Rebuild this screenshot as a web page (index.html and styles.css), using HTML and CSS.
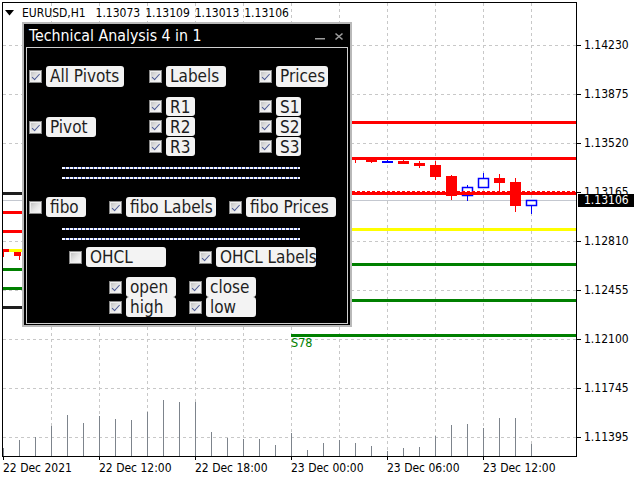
FILE: index.html
```html
<!DOCTYPE html>
<html>
<head>
<meta charset="utf-8">
<title>EURUSD,H1</title>
<link rel="stylesheet" href="styles.css">
</head>
<body>
<div class="screen">
  <div class="plotcell">
    <div class="plot">
      <svg class="graph" width="573" height="453" viewBox="3 3 573 453">
        <g class="grid" fill="none" stroke="#c8c8c8" stroke-width="1" stroke-dasharray="3 3" shape-rendering="crispEdges">
          <path d="M3 45.5H576M3 94.5H576M3 143.5H576M3 192.5H576M3 241.5H576M3 290.5H576M3 339.5H576M3 388.5H576M3 437.5H576"/>
          <path d="M51.5 3V456M99.5 3V456M147.5 3V456M195.5 3V456M243.5 3V456M291.5 3V456M339.5 3V456M387.5 3V456M435.5 3V456M483.5 3V456M531.5 3V456"/>
        </g>
        <path fill="none" stroke="#7d848c" stroke-width="1" shape-rendering="crispEdges" d="M3.5 456V448M19.5 456V440M35.5 456V437M51.5 456V426M67.5 456V415M83.5 456V423M99.5 456V416M115.5 456V419M131.5 456V420M147.5 456V412M163.5 456V400M179.5 456V402M195.5 456V402M211.5 456V432M227.5 456V438M243.5 456V439M259.5 456V439M275.5 456V445M291.5 456V433M307.5 456V450M323.5 456V443M339.5 456V440M355.5 456V443M371.5 456V446M387.5 456V451M403.5 456V448M419.5 456V447M435.5 456V436M451.5 456V425M467.5 456V424M483.5 456V428M499.5 456V418M515.5 456V418M531.5 456V444"/>
        <path fill="none" stroke="#c4c8d0" stroke-width="1" shape-rendering="crispEdges" d="M3 200.5H576"/>
        <g shape-rendering="crispEdges">
          <path fill="none" stroke="#ff0000" stroke-width="1" d="M355.5 157V163M371.5 157V163M403.5 158V164M419.5 161V168M435.5 161V180M451.5 175V200M499.5 174V191M515.5 178V212"/>
          <path fill="none" stroke="#0000ff" stroke-width="1" d="M387.5 159V163M467.5 185V201M483.5 173V188M531.5 200V214"/>
          <rect x="350" y="157" width="11" height="3" fill="#ff0000"/>
          <rect x="366" y="158" width="11" height="4" fill="#ff0000"/>
          <rect x="382" y="161" width="11" height="2" fill="#0000ff"/>
          <rect x="398" y="161" width="11" height="3" fill="#ff0000"/>
          <rect x="414" y="163" width="11" height="3" fill="#ff0000"/>
          <rect x="430" y="165" width="11" height="12" fill="#ff0000"/>
          <rect x="446" y="176" width="11" height="20" fill="#ff0000"/>
          <rect x="494" y="178" width="11" height="5" fill="#ff0000"/>
          <rect x="510" y="182" width="11" height="24" fill="#ff0000"/>
        </g>
        <g fill="#ffffff" stroke="#0000ff" stroke-width="1.5">
          <rect x="462.5" y="187.5" width="10" height="8"/>
          <rect x="478.5" y="178.5" width="10" height="9"/>
          <rect x="526.5" y="200.5" width="10" height="5"/>
        </g>
        <g shape-rendering="crispEdges">
          <rect x="352" y="121" width="224" height="3" fill="#ff0000"/>
          <rect x="352" y="157" width="224" height="3" fill="#ff0000"/>
          <rect x="352" y="192" width="224" height="3" fill="#ff0000"/>
          <path d="M352 191.5H576" stroke="#ff0000" stroke-width="1" stroke-dasharray="3 2"/>
          <rect x="352" y="228" width="224" height="3" fill="#ffff00"/>
          <rect x="352" y="263" width="224" height="3" fill="#008000"/>
          <rect x="352" y="299" width="224" height="3" fill="#008000"/>
          <rect x="291" y="334" width="285" height="3" fill="#008000"/>
          <rect x="3" y="192" width="19" height="3" fill="#1e1e1e"/>
          <rect x="3" y="211" width="19" height="3" fill="#ff0000"/>
          <rect x="3" y="230" width="19" height="3" fill="#ff0000"/>
          <rect x="3" y="249" width="6" height="3" fill="#ff0000"/>
          <rect x="9" y="249" width="13" height="3" fill="#ffff00"/>
          <rect x="3" y="249" width="1" height="8" fill="#ff0000"/>
          <rect x="14" y="252" width="7" height="4" fill="#ff0000"/>
          <rect x="19" y="252" width="1" height="8" fill="#ff0000"/>
          <rect x="3" y="268" width="19" height="3" fill="#008000"/>
          <rect x="3" y="287" width="19" height="3" fill="#008000"/>
          <rect x="3" y="306" width="19" height="3" fill="#1e1e1e"/>
        </g>
        <text class="objlabel" x="291" y="347">S78</text>
      </svg>
      <div class="header">
        <svg class="tri" width="9" height="6" viewBox="0 0 9 6"><polygon points="0,0 9,0 4.5,5.5" fill="#000"/></svg>
        <span class="quote">EURUSD,H1  1.13073 1.13109 1.13013 1.13106</span>
      </div>
    </div>
  </div>

  <div class="yaxis">
    <div class="ylab">1.14230</div>
    <div class="ylab">1.13875</div>
    <div class="ylab">1.13520</div>
    <div class="ylab">1.13165</div>
    <div class="ylab">1.12810</div>
    <div class="ylab">1.12455</div>
    <div class="ylab">1.12100</div>
    <div class="ylab">1.11745</div>
    <div class="ylab">1.11395</div>
  </div>

  <div class="xaxis">
    <div class="xlab">22 Dec 2021</div>
    <div class="xlab">22 Dec 12:00</div>
    <div class="xlab">22 Dec 18:00</div>
    <div class="xlab">23 Dec 00:00</div>
    <div class="xlab">23 Dec 06:00</div>
    <div class="xlab">23 Dec 12:00</div>
  </div>

  <div class="curprice">1.13106</div>

  <div class="panel">
    <div class="titlebar">
      <span class="title">Technical Analysis 4 in 1</span>
      <svg class="winbtns" width="32" height="10" viewBox="0 0 32 10">
        <path d="M2 7.75H12" stroke="#9c9c9c" stroke-width="1.5" fill="none"/>
        <path d="M22.5 2.5L29.5 8.5M29.5 2.5L22.5 8.5" stroke="#9c9c9c" stroke-width="1.6" fill="none"/>
      </svg>
    </div>
    <div class="frame">
      <div class="top">
        <div class="ctl a1"><i class="cb on"></i><span class="lbl h21 w78">All Pivots</span></div>
        <div class="ctl a2"><i class="cb on"></i><span class="lbl h21 w60">Labels</span></div>
        <div class="ctl a3"><i class="cb on"></i><span class="lbl h21 w52">Prices</span></div>
        <div class="ctl pv"><i class="cb on"></i><span class="lbl h20 w50">Pivot</span></div>
        <div class="ctl r1"><i class="cb on"></i><span class="lbl h19 w29">R1</span></div>
        <div class="ctl r2"><i class="cb on"></i><span class="lbl h19 w29">R2</span></div>
        <div class="ctl r3"><i class="cb on"></i><span class="lbl h19 w29">R3</span></div>
        <div class="ctl s1"><i class="cb on"></i><span class="lbl h19 w25">S1</span></div>
        <div class="ctl s2"><i class="cb on"></i><span class="lbl h19 w25">S2</span></div>
        <div class="ctl s3"><i class="cb on"></i><span class="lbl h19 w25">S3</span></div>
      </div>
      <div class="dash d1"></div>
      <div class="dash d2"></div>
      <div class="row fibo">
        <div class="ctl"><i class="cb"></i><span class="lbl h20 w40">fibo</span></div>
        <div class="ctl"><i class="cb on"></i><span class="lbl h20 w90">fibo Labels</span></div>
        <div class="ctl"><i class="cb on"></i><span class="lbl h20 w90">fibo Prices</span></div>
      </div>
      <div class="dash d3"></div>
      <div class="dash d2"></div>
      <div class="row ohcl">
        <div class="ctl"><i class="cb"></i><span class="lbl h20 w80">OHCL</span></div>
        <div class="ctl"><i class="cb on"></i><span class="lbl h20 w100">OHCL Labels</span></div>
      </div>
      <div class="row oc">
        <div class="ctl"><i class="cb on"></i><span class="lbl h20 w50">open</span></div>
        <div class="ctl"><i class="cb on"></i><span class="lbl h20 w50">close</span></div>
      </div>
      <div class="row hl">
        <div class="ctl"><i class="cb on"></i><span class="lbl h20 w50">high</span></div>
        <div class="ctl"><i class="cb on"></i><span class="lbl h20 w50">low</span></div>
      </div>
    </div>
  </div>
</div>
</body>
</html>
```

FILE: styles.css
```css
* { box-sizing: border-box; }
html, body { margin: 0; padding: 0; background: #ffffff; }
body {
  width: 640px;
  height: 480px;
  overflow: hidden;
  font-family: "DejaVu Sans Condensed", "Liberation Sans", sans-serif;
  color: #000;
}
.screen {
  position: relative;
  width: 640px;
  height: 480px;
  display: grid;
  grid-template-columns: 577px 63px;
  grid-template-rows: 457px 23px;
}
.plotcell { padding: 2px 0 0 2px; }
.plot {
  position: relative;
  width: 575px;
  height: 455px;
  border: 1px solid #000;
}
.graph { display: block; }
.objlabel {
  fill: #008000;
  font-size: 12.5px;
  font-family: "DejaVu Sans Condensed", "Liberation Sans", sans-serif;
}
.header {
  position: absolute;
  left: 2px;
  top: 3px;
  display: flex;
  align-items: center;
  gap: 8px;
  font-size: 12px;
  line-height: 14px;
}
.tri { display: block; margin-top: -1px; }
.quote { white-space: pre; word-spacing: 1.5px; }

.yaxis {
  display: flex;
  flex-direction: column;
  gap: 35px;
  padding-top: 38px;
}
.ylab {
  position: relative;
  height: 14px;
  line-height: 14px;
  font-size: 12px;
  padding-left: 7px;
  white-space: nowrap;
}
.ylab::before {
  content: "";
  position: absolute;
  left: 0;
  top: 7px;
  width: 4px;
  height: 1px;
  background: #000;
}
.xaxis {
  grid-column: 1 / span 2;
  display: flex;
  padding: 4px 0 0 3px;
}
.xlab {
  position: relative;
  flex: none;
  width: 96px;
  font-size: 12px;
  line-height: 14px;
  white-space: nowrap;
}
.xlab::before {
  content: "";
  position: absolute;
  left: 0;
  top: -5px;
  width: 1px;
  height: 4px;
  background: #000;
}
.curprice {
  position: absolute;
  left: 578px;
  top: 194px;
  width: 56px;
  height: 13px;
  background: #000;
  color: #fff;
  font-size: 12px;
  line-height: 13px;
  padding-left: 6px;
}

/* dialog */
.panel {
  position: absolute;
  left: 22px;
  top: 22px;
  width: 330px;
  height: 305px;
  background: #000;
  border: 2px solid #b9b9b9;
}
.titlebar {
  height: 23px;
  display: flex;
  justify-content: space-between;
  align-items: flex-start;
}
.title {
  color: #fff;
  font-size: 15.8px;
  line-height: 23px;
  padding-left: 5px;
  white-space: nowrap;
}
.winbtns { display: block; margin: 7px 5px 0 0; }
.frame {
  margin: 0 2px;
  height: 277px;
  border: 1px solid #cfcfcf;
}
.top {
  display: grid;
  grid-template-columns: 120px 110px 90px;
  grid-template-rows: 21px 10px 20px 20px 20px;
  margin-top: 18px;
  padding-left: 2px;
}
.a1 { grid-area: 1 / 1; }
.a2 { grid-area: 1 / 2; }
.a3 { grid-area: 1 / 3; }
.pv { grid-area: 4 / 1; }
.r1 { grid-area: 3 / 2; }
.r2 { grid-area: 4 / 2; }
.r3 { grid-area: 5 / 2; }
.s1 { grid-area: 3 / 3; }
.s2 { grid-area: 4 / 3; }
.s3 { grid-area: 5 / 3; }

.ctl {
  display: flex;
  align-items: center;
  gap: 4px;
  align-self: start;
}
.cb {
  position: relative;
  display: block;
  flex: none;
  width: 13px;
  height: 13px;
  border: 1px solid #8a8a8a;
  background: linear-gradient(135deg, #bdbdbd 0%, #e8e8e8 55%, #fbfbfb 100%);
  box-shadow: inset 0 0 0 1px #efefef;
}
.cb.on::after {
  content: "";
  position: absolute;
  left: 3.5px;
  top: 1px;
  width: 3px;
  height: 6.5px;
  border: solid #4a5894;
  border-width: 0 1.6px 1.6px 0;
  transform: rotate(42deg);
}
.lbl {
  display: block;
  flex: none;
  background: #f3f3f3;
  color: #1e1e1e;
  border-radius: 3px;
  font-size: 17px;
  padding-left: 4px;
  white-space: nowrap;
  overflow: hidden;
}
.h21 { height: 21px; line-height: 21px; }
.h20 { height: 20px; line-height: 20px; }
.h19 { height: 19px; line-height: 20px; }
.w25 { width: 25px; }
.w29 { width: 29px; }
.w40 { width: 40px; }
.w50 { width: 50px; }
.w52 { width: 52px; }
.w60 { width: 60px; }
.w78 { width: 78px; }
.w80 { width: 80px; }
.w90 { width: 90px; }
.w100 { width: 100px; }

.dash {
  width: 238px;
  height: 2px;
  margin-left: 35px;
  background: repeating-linear-gradient(90deg, #f4f6ff 0 3px, #3a52b0 3px 4px);
}
.d1 { margin-top: 10px; }
.d2 { margin-top: 8px; }
.d3 { margin-top: 11px; }

.row { display: flex; }
.fibo { margin-top: 18px; padding-left: 2px; }
.fibo .ctl:nth-child(2) { margin-left: 23px; }
.fibo .ctl:nth-child(3) { margin-left: 13px; }
.ohcl { margin-top: 7px; padding-left: 42px; }
.ohcl .ctl:nth-child(2) { margin-left: 33px; }
.oc { margin-top: 10px; padding-left: 82px; }
.hl { padding-left: 82px; }
.oc .ctl:nth-child(2), .hl .ctl:nth-child(2) { margin-left: 13px; }
```
